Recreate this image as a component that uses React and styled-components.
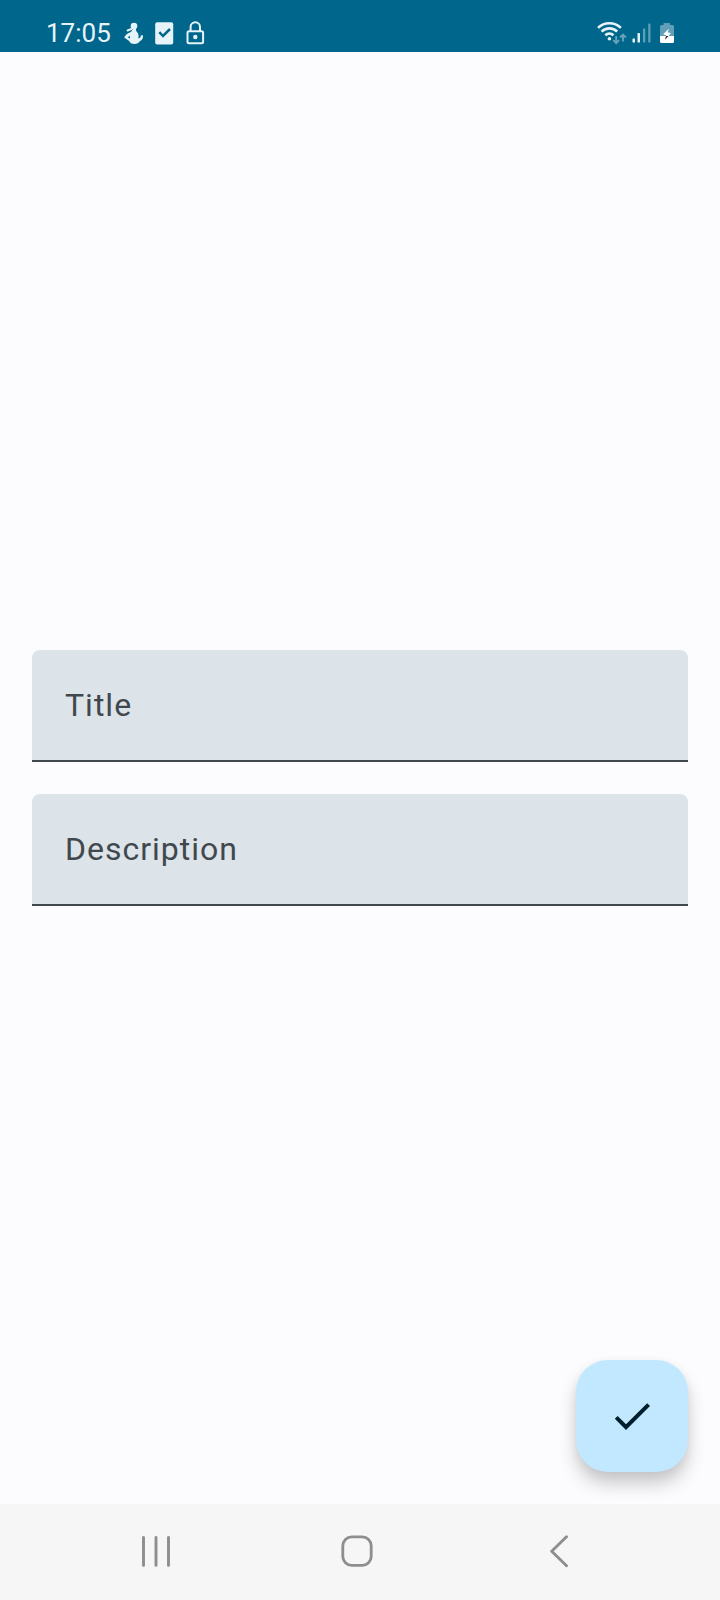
import React from "react";
import styled, { createGlobalStyle } from "styled-components";

const GlobalStyle = createGlobalStyle`
  *, *::before, *::after { box-sizing: border-box; }
  body {
    margin: 0;
    background: #fcfcff;
    font-family: Roboto, "Noto Sans", sans-serif;
  }
`;

const Screen = styled.div`
  min-height: 100vh;
  display: flex;
  flex-direction: column;
  background: #fcfcff;
`;

const StatusBar = styled.header`
  display: flex;
  justify-content: space-between;
  height: 52px;
  padding: 14px 44px 0 46px;
  background: #00668b;
  color: #e6f4f9;
`;

const StatusGroup = styled.div`
  display: flex;
  align-items: center;
  gap: ${(p) => p.$gap}px;
`;

const Clock = styled.time`
  font-size: 26px;
  line-height: 38px;
  margin-right: 5px;
`;

const Main = styled.main`
  position: relative;
  flex: 1;
  display: flex;
  flex-direction: column;
  justify-content: center;
  padding: 32px;
`;

const Form = styled.form`
  display: flex;
  flex-direction: column;
  gap: 32px;
`;

const Field = styled.label`
  display: flex;
  align-items: center;
  gap: 16px;
  height: 112px;
  padding: 0 33px;
  border-bottom: 2px solid #41484d;
  border-radius: 8px 8px 0 0;
  background: #dce3e9;
  color: #41484d;
  font-size: 32px;
  line-height: 48px;
  letter-spacing: 1px;
`;

const FieldInput = styled.input`
  flex: 1;
  min-width: 0;
  padding: 0;
  border: 0;
  outline: 0;
  background: transparent;
  color: #191c1e;
  font: inherit;
  letter-spacing: inherit;
`;

const SaveButton = styled.button`
  position: absolute;
  right: 32px;
  bottom: 32px;
  display: grid;
  place-items: center;
  width: 112px;
  height: 112px;
  padding: 0;
  border: 0;
  border-radius: 32px;
  background: #c2e8ff;
  color: #001e2c;
  box-shadow: 0 12px 18px rgba(0, 0, 0, 0.2), 0 2px 10px rgba(0, 0, 0, 0.05);
  cursor: pointer;
`;

const NavBar = styled.nav`
  display: flex;
  height: 96px;
  padding: 0 60px 0 54px;
  background: #f6f6f6;
`;

const NavButton = styled.button`
  flex: 1;
  display: grid;
  place-items: center;
  padding: 0;
  border: 0;
  background: transparent;
  color: #8e8e8e;
  cursor: pointer;
`;

const MascotIcon = () => (
  <svg width="24" height="26" viewBox="0 0 24 26" fill="currentColor" aria-hidden="true">
    <circle cx="12" cy="6" r="3.300" />
    <path d="M10.500 7.600L9 9.200 5.600 10.500" fill="none" stroke="currentColor" strokeWidth="2" strokeLinecap="round" />
    <path
      fillRule="evenodd"
      d="M10.800 8h3.200c-.2 2.400.3 3.200 1.400 4.600 1.400 1.700 1.300 3.800 1 5.900 1.700-.2 2.600-1.500 2.400-2.900l1.800-.5c1 2.800-.3 5.400-2.900 6.100-.8 1.800-2.700 2.800-5.300 2.800-2.800 0-4.600-1-5.200-3L2.200 17.600c1-2.600 3-4.200 5.800-5.200C9.600 11.600 10.500 10.400 10.800 8zM7.800 15.600L5.800 17.400l2.200 1.100z"
    />
  </svg>
);

const TaskIcon = () => (
  <svg width="24" height="26" viewBox="0 0 24 26" aria-hidden="true">
    <rect x="3.200" y="2.200" width="18" height="22.200" rx="2" fill="currentColor" />
    <path d="M7.300 12.200L11 16L18 9" fill="none" stroke="#00668b" strokeWidth="2.500" />
  </svg>
);

const LockIcon = () => (
  <svg width="24" height="26" viewBox="0 0 24 26" fill="none" stroke="currentColor" strokeWidth="2" aria-hidden="true">
    <rect x="5.500" y="11.200" width="15.600" height="12" rx="1.500" />
    <path d="M8.600 11V7a4.700 4.700 0 0 1 9.400 0V11" />
    <circle cx="13.300" cy="17" r="2.200" fill="currentColor" stroke="none" />
  </svg>
);

const WifiIcon = () => (
  <svg width="32" height="26" viewBox="0 0 32 26" fill="none" aria-hidden="true">
    <g stroke="currentColor" strokeWidth="2.600">
      <path d="M2 7.900C8.300 1.600 18.500 1.600 24.900 7.900" />
      <path d="M5.600 11.600C9.900 7.300 16.900 7.300 21.200 11.600" />
      <path d="M9.300 15.300C11.700 13 15.100 13 17.500 15.300" />
    </g>
    <circle cx="13.400" cy="18.800" r="1.800" fill="currentColor" />
    <g stroke="#fff" strokeOpacity=".4" strokeWidth="1.900">
      <path d="M20.200 16v7M17.300 20.200L20.200 23.100L23.100 20.200" />
      <path d="M27 21.500V14.700M24.100 17.500L27 14.600L29.900 17.500" />
    </g>
  </svg>
);

const SignalIcon = () => (
  <svg width="20" height="26" viewBox="0 0 20 26" fill="currentColor" aria-hidden="true">
    <rect x="0.500" y="18.500" width="2.500" height="4" rx=".6" />
    <rect x="5.500" y="13" width="2.500" height="9.500" rx=".6" />
    <rect x="11" y="8.500" width="2.300" height="14" rx=".6" opacity=".4" />
    <rect x="16.200" y="3.500" width="2.300" height="19" rx=".6" opacity=".4" />
  </svg>
);

const BatteryIcon = () => (
  <svg width="20" height="26" viewBox="0 0 20 26" aria-hidden="true">
    <path d="M8 3h5.500q.5 0 .5.500V5H16.500Q18 5 18 6.500V16H4V6.500Q4 5 5.500 5H7.500V3.500Q7.500 3 8 3z" fill="#629eb6" />
    <path d="M4 16H18V21.500Q18 23 16.500 23H5.500Q4 23 4 21.500z" fill="#fff" />
    <path d="M12.800 8.700L7.200 14.200L10.200 15.200L9.300 19.400L14.900 13.300L11.800 12.300z" fill="#fff" />
    <path d="M10 16H12.500L9 19.800z" fill="#202a30" />
  </svg>
);

const CheckIcon = () => (
  <svg width="48" height="48" viewBox="0 0 24 24" fill="currentColor" aria-hidden="true">
    <path d="M9 16.170L4.830 12l-1.420 1.410L9 19 21 7l-1.410-1.410z" />
  </svg>
);

const RecentsIcon = () => (
  <svg width="34" height="34" viewBox="0 0 34 34" stroke="currentColor" strokeWidth="2.900" strokeLinecap="round" aria-hidden="true">
    <path d="M5.500 2.400V30.400M18 2.400V30.400M30.500 2.400V30.400" />
  </svg>
);

const HomeIcon = () => (
  <svg width="34" height="34" viewBox="0 0 34 34" fill="none" stroke="currentColor" strokeWidth="2.800" aria-hidden="true">
    <rect x="2.800" y="1.800" width="28.400" height="28.600" rx="9" />
  </svg>
);

const BackIcon = () => (
  <svg width="34" height="34" viewBox="0 0 34 34" fill="none" stroke="currentColor" strokeWidth="2.900" strokeLinecap="round" strokeLinejoin="round" aria-hidden="true">
    <path d="M24.500 1.700L9.700 16.200L24.500 30.700" />
  </svg>
);

const NAV_ITEMS = [
  { label: "Recent apps", Icon: RecentsIcon },
  { label: "Home", Icon: HomeIcon },
  { label: "Back", Icon: BackIcon },
];

export default function App() {
  return (
    <Screen>
      <GlobalStyle />
      <StatusBar>
        <StatusGroup $gap={6}>
          <Clock>17:05</Clock>
          <MascotIcon />
          <TaskIcon />
          <LockIcon />
        </StatusGroup>
        <StatusGroup $gap={4}>
          <WifiIcon />
          <SignalIcon />
          <BatteryIcon />
        </StatusGroup>
      </StatusBar>
      <Main>
        <Form id="note-form" onSubmit={(e) => e.preventDefault()}>
          <Field htmlFor="title">
            Title
            <FieldInput id="title" name="title" type="text" />
          </Field>
          <Field htmlFor="description">
            Description
            <FieldInput id="description" name="description" type="text" />
          </Field>
        </Form>
        <SaveButton type="submit" form="note-form" aria-label="Save">
          <CheckIcon />
        </SaveButton>
      </Main>
      <NavBar aria-label="System navigation">
        {NAV_ITEMS.map(({ label, Icon }) => (
          <NavButton key={label} type="button" aria-label={label}>
            <Icon />
          </NavButton>
        ))}
      </NavBar>
    </Screen>
  );
}
